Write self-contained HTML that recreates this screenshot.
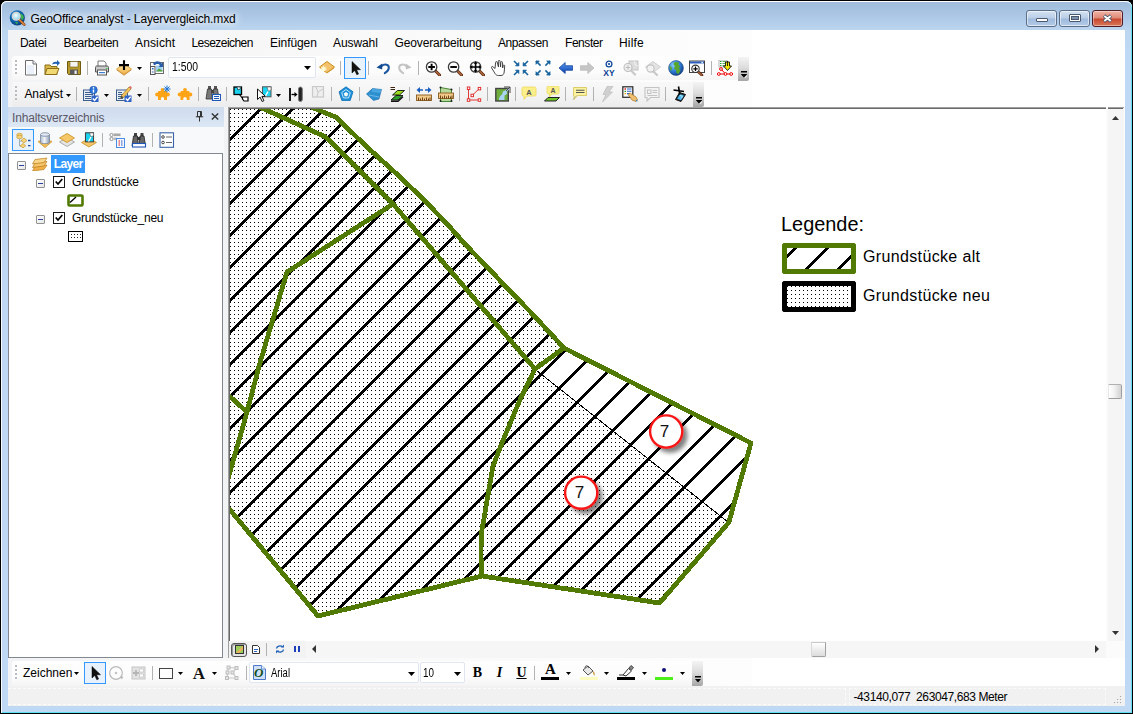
<!DOCTYPE html>
<html lang="de">
<head>
<meta charset="utf-8">
<title>GeoOffice analyst - Layervergleich.mxd</title>
<style>
html,body{margin:0;padding:0;}
body{width:1133px;height:714px;overflow:hidden;background:#000;position:relative;font-family:"Liberation Sans",sans-serif;font-size:12px;color:#000;}
.a{position:absolute;}
.t{position:absolute;white-space:nowrap;line-height:14px;}
#win{left:0;top:0;width:1133px;height:714px;background:#000;}
#frame{left:1px;top:1px;width:1131px;height:712px;border-radius:6px 6px 0 0;background:linear-gradient(#9fbcdc 0px,#a4c0df 6px,#afcae8 18px,#bcd6f0 29px,#bfd9f4 50px,#bfd9f4 100%);box-shadow:inset 0 1px 0 0 #fff,inset 1px 0 0 0 rgba(255,255,255,.85),inset -1px 0 0 0 #5fe0f5,inset 0 -1px 0 0 #5fe0f5;}
#client{left:8px;top:30px;width:1117px;height:676px;background:#fff;}
.sep{position:absolute;width:1px;background:#b2b2b2;}
.grip{position:absolute;width:2px;}
.tb{position:absolute;background:linear-gradient(#fafbfb,#f3f4f4 60%,#ebebeb);}
</style>
</head>
<body>
<div class="a" id="win">
<div class="a" id="frame"></div>
<!--TITLE-->
<svg class="a" style="left:9px;top:9px" width="18" height="18" viewBox="0 0 18 18">
<defs><radialGradient id="gl" cx="40%" cy="35%" r="70%"><stop offset="0" stop-color="#3aa0e0"/><stop offset=".6" stop-color="#0d5fa8"/><stop offset="1" stop-color="#0a3a72"/></radialGradient>
<radialGradient id="ln" cx="45%" cy="40%" r="60%"><stop offset="0" stop-color="#f4fcff"/><stop offset="1" stop-color="#8fd4f4"/></radialGradient></defs>
<circle cx="8.3" cy="8.8" r="7.6" fill="url(#gl)"/>
<path d="M11 4.5l3 1.5l.8 3l-2 2.5l-1-3z M6 13l3 .5l-1 2z" fill="#3cb54a"/>
<path d="M10 10.5L15.3 15.6" stroke="#7a3d12" stroke-width="2.6" stroke-linecap="round"/>
<path d="M10 10.5L15.2 15.5" stroke="#e8853a" stroke-width="1.5" stroke-linecap="round"/>
<circle cx="7.2" cy="7.2" r="3.9" fill="url(#ln)" stroke="#d9d4cf" stroke-width="1.3"/>
</svg>
<div class="t" style="left:30.500px;top:12px;font-size:12px;letter-spacing:-.125px;text-shadow:0 0 6px #fff,0 0 9px #fff,0 0 12px rgba(255,255,255,.8)">GeoOffice analyst - Layervergleich.mxd</div>
<!-- window buttons -->
<div class="a" style="left:1026px;top:10px;width:31px;height:17px;border:1px solid #5b6f88;border-radius:3px;box-sizing:border-box;background:linear-gradient(#d4e2f2 0,#b9cde6 48%,#9fbade 52%,#b4cbe7 100%);box-shadow:inset 0 0 0 1px rgba(255,255,255,.55)"></div>
<div class="a" style="left:1036px;top:18px;width:12px;height:4px;background:#fff;border:1px solid #4a5870;box-sizing:border-box;border-radius:1px"></div>
<div class="a" style="left:1059px;top:10px;width:31px;height:17px;border:1px solid #5b6f88;border-radius:3px;box-sizing:border-box;background:linear-gradient(#d4e2f2 0,#b9cde6 48%,#9fbade 52%,#b4cbe7 100%);box-shadow:inset 0 0 0 1px rgba(255,255,255,.55)"></div>
<div class="a" style="left:1069px;top:14px;width:12px;height:8px;background:#fff;border:1px solid #4a5870;box-sizing:border-box;border-radius:1px"></div>
<div class="a" style="left:1072px;top:17px;width:6px;height:2px;background:#7f93b0;border:1px solid #4a5870;box-sizing:content-box;margin:-1px 0 0 -1px"></div>
<div class="a" style="left:1092px;top:10px;width:31px;height:17px;border:1px solid #4f1c26;border-radius:3px;box-sizing:border-box;background:linear-gradient(#f0b3a4 0,#e08a78 47%,#c8492f 53%,#d9765a 100%);box-shadow:inset 0 0 0 1px rgba(255,255,255,.4)"></div>
<svg class="a" style="left:1102px;top:14px" width="11" height="9" viewBox="0 0 11 9"><path d="M2 1.700L9 7.300M9 1.700L2 7.300" stroke="#3f4c66" stroke-width="3.400"/><path d="M2.300 2L8.700 7M8.700 2L2.300 7" stroke="#fff" stroke-width="2"/></svg>
<div class="a" id="client"></div>
<!--MENUS-->
<div class="a" style="left:8px;top:30px;width:744px;height:77px;background:linear-gradient(90deg,#f2f3f4,#f8f8f9 40%,#fdfdfd)"></div>
<div class="t" style="left:20.0px;top:35.8px;font-size:12px;line-height:14px;letter-spacing:-0.329px;">Datei</div>
<div class="t" style="left:63.5px;top:35.8px;font-size:12px;line-height:14px;letter-spacing:-0.305px;">Bearbeiten</div>
<div class="t" style="left:135.0px;top:35.8px;font-size:12px;line-height:14px;letter-spacing:0.140px;">Ansicht</div>
<div class="t" style="left:191.5px;top:35.8px;font-size:12px;line-height:14px;letter-spacing:-0.549px;">Lesezeichen</div>
<div class="t" style="left:270.0px;top:35.8px;font-size:12px;line-height:14px;letter-spacing:-0.068px;">Einfügen</div>
<div class="t" style="left:333.0px;top:35.8px;font-size:12px;line-height:14px;letter-spacing:-0.093px;">Auswahl</div>
<div class="t" style="left:394.5px;top:35.8px;font-size:12px;line-height:14px;letter-spacing:-0.135px;">Geoverarbeitung</div>
<div class="t" style="left:498.0px;top:35.8px;font-size:12px;line-height:14px;letter-spacing:-0.439px;">Anpassen</div>
<div class="t" style="left:565.0px;top:35.8px;font-size:12px;line-height:14px;letter-spacing:-0.448px;">Fenster</div>
<div class="t" style="left:619.0px;top:35.8px;font-size:12px;line-height:14px;letter-spacing:0.196px;">Hilfe</div>
<!--/MENUS-->
<!--TOOLBARS-->
<div class="a" style="left:12px;top:56px;width:726px;height:24px;border-radius:3px 0 0 3px;background:linear-gradient(#fefefe,#fcfcfc 65%,#f5f5f5)"></div>
<div class="a" style="left:12px;top:82px;width:681px;height:25px;border-radius:3px 0 0 3px;background:linear-gradient(#f8f8f8,#f3f3f3 55%,#ececec)"></div>
<div class="a" style="left:738px;top:57px;width:11px;height:24px;background:linear-gradient(#f4f4f4 0%,#dcdcdc 45%,#a6a6a6 100%);border-radius:0 0 2px 0"></div><svg class="a" style="left:741px;top:71px" width="6" height="7" viewBox="0 0 6 7"><path d="M0 0h6v1.500h-6zM0 3h6l-3 3.500z" fill="#000"/><path d="M1 4.500h5l-2.500 3z" fill="#fff" opacity=".6" transform="translate(.6 .3)"/><path d="M0 3h6l-3 3.500z" fill="#000"/></svg>
<div class="a" style="left:693px;top:82px;width:11px;height:25px;background:linear-gradient(#f4f4f4 0%,#dcdcdc 45%,#a6a6a6 100%);border-radius:0 0 2px 0"></div><svg class="a" style="left:696px;top:97px" width="6" height="7" viewBox="0 0 6 7"><path d="M0 0h6v1.500h-6zM0 3h6l-3 3.500z" fill="#000"/><path d="M1 4.500h5l-2.500 3z" fill="#fff" opacity=".6" transform="translate(.6 .3)"/><path d="M0 3h6l-3 3.500z" fill="#000"/></svg>
<svg class="a" style="left:15px;top:59px" width="3" height="16" viewBox="0 0 3 16"><path d="M0 1h2v2h-2zM0 5h2v2h-2zM0 9h2v2h-2zM0 13h2v2h-2z" fill="#b8bcc2"/></svg>
<svg class="a" style="left:23px;top:60px" width="16" height="16" viewBox="0 0 16 16"><path d="M2.5 .5h7.500l3.500 3.500v11h-11z" fill="#fff" stroke="#6e6e6e"/><path d="M10 .5v3.500h3.500" fill="#e8eef8" stroke="#6e6e6e"/><path d="M4 5h7v9h-7z" fill="#eaf1fb"/></svg>
<svg class="a" style="left:44px;top:60px" width="16" height="16" viewBox="0 0 16 16"><path d="M1 5h5l1 1.500h6v8h-12z" fill="#d9b84a" stroke="#8a6d14"/><path d="M3 8.500h12l-2.500 6h-11.500z" fill="#f1d873" stroke="#8a6d14"/><path d="M8 4.500c1-2.500 3-3 5-2.500v-2l3 3l-3 3v-2c-2-.5-3.500 0-5 .5z" fill="#1d5fb4"/></svg>
<svg class="a" style="left:66px;top:60px" width="16" height="16" viewBox="0 0 16 16"><path d="M1.500 1.500h13v13h-12l-1-1z" fill="#b89a2e" stroke="#6d5a10"/><rect x="4" y="1.500" width="8" height="5.500" fill="#f4f4f4" stroke="#6d5a10" stroke-width=".6"/><rect x="4" y="9.500" width="8" height="5" fill="#5a5a5a"/><rect x="8.500" y="10.500" width="2.200" height="3.500" fill="#eee"/></svg>
<div class="sep" style="left:87px;top:61px;height:14px"></div>
<svg class="a" style="left:94px;top:60px" width="16" height="16" viewBox="0 0 16 16"><path d="M4 1h6l2 2v5h-8z" fill="#fff" stroke="#777"/><path d="M1.500 7.500c0-1 .5-1.500 1.500-1.500h10c1 0 1.500 .5 1.500 1.500v4.500h-13z" fill="#c9c9c9" stroke="#555"/><rect x="3.500" y="10" width="9" height="5" fill="#fff" stroke="#555"/><rect x="5" y="12" width="6" height="1.200" fill="#3d7fd6"/><rect x="12" y="8" width="1.500" height="1" fill="#3c3"/></svg><svg class="a" style="left:116px;top:60px" width="16" height="16" viewBox="0 0 16 16"><defs><linearGradient id="ad" x1="0" y1="0" x2="0" y2="1"><stop offset="0" stop-color="#fdeab8"/><stop offset="1" stop-color="#f0b040"/></linearGradient></defs><path d="M.5 9l7.500-5.500l7.500 5.500l-7.500 5.500z" fill="url(#ad)" stroke="#d79a34" stroke-width=".8"/><path d="M.8 9.900l7.200 5.300l7.200-5.300" fill="none" stroke="#c98a28" stroke-width=".9"/><path d="M8 .3v9.600M3 5.100h10" stroke="#000" stroke-width="2.100"/></svg><svg class="a" style="left:137px;top:67px" width="5" height="3" viewBox="0 0 5 3"><path d="M0 0h5l-2.500 3z" fill="#000"/></svg>
<svg class="a" style="left:149px;top:60px" width="16" height="16" viewBox="0 0 16 16"><rect x="1.500" y="2.500" width="13" height="11" fill="#fff" stroke="#6a6a6a" stroke-width="1"/><rect x="7" y="5.500" width="6.500" height="6" fill="#9fd0f4"/><path d="M7 11.500l3-3l3.500 2v1z" fill="#58a33c"/><rect x="1.500" y="6.500" width="4.500" height="8" fill="#f4f4f4" stroke="#555" stroke-width="1"/><rect x="3" y="8" width="1.500" height="1.500" fill="#2a6fc4"/><path d="M3 12h1.500" stroke="#2a6fc4" stroke-width="1"/><path d="M4 4c1.500-3.500 6.500-3.500 8.500-.5l1.500-1v4.500h-4.500l1.500-1.500c-1.500-2-4-1.800-5 0z" fill="#2a5da8"/></svg>
<div class="a" style="left:168px;top:57px;width:148px;height:21px;box-sizing:border-box;border:1px solid #dfe6f0;border-radius:2px;background:#fff"></div>
<div class="t" style="left:171.5px;top:59.8px;font-size:12px;line-height:14px;transform:scaleX(0.8658);transform-origin:0 0;">1:500</div><svg class="a" style="left:304px;top:66px" width="7" height="4" viewBox="0 0 7 4"><path d="M0 0h7l-3.500 4z" fill="#000"/></svg>
<svg class="a" style="left:319px;top:59px" width="16" height="16" viewBox="0 0 16 16"><path d="M.5 8l7.500-5.500l7.500 5.500l-7.500 5.500z" fill="#f4c26a" stroke="#c98d20"/><path d="M1 9l7 5l7-5" fill="none" stroke="#d69a2e"/><circle cx="4.500" cy="10" r="2.200" fill="#fff8c8"/><path d="M4.500 6.500v7M1 10h7M2 7.500l5 5M7 7.500l-5 5" stroke="#fffbe0" stroke-width=".8"/></svg><div class="sep" style="left:340px;top:61px;height:14px"></div>
<div class="a" style="left:344px;top:57px;width:22px;height:22px;box-sizing:border-box;border:1px solid #3399ff;background:#e8f2fd"></div>
<svg class="a" style="left:348px;top:60px" width="16" height="16" viewBox="0 0 16 16"><path d="M4 1.500v11.500l2.800-2.600l2 4.400l1.800-.8l-2-4.300h3.900z" fill="#111" stroke="#000" stroke-width=".5" stroke-linejoin="round"/></svg><div class="sep" style="left:368px;top:61px;height:14px"></div>
<svg class="a" style="left:375px;top:60px" width="16" height="16" viewBox="0 0 16 16"><path d="M6.500 6.300C9.500 3.300 14.300 4.300 13.800 8.200C13.500 10.500 12 12 9.800 13.200" fill="none" stroke="#1a55a0" stroke-width="2" stroke-linecap="round"/><path d="M1.500 7.600l5.700-4v5.800z" fill="#0f4a92"/></svg><svg class="a" style="left:397px;top:60px" width="16" height="16" viewBox="0 0 16 16"><path d="M9.500 6.300C6.500 3.300 1.700 4.300 2.200 8.200C2.500 10.500 4 12 6.200 13.200" fill="none" stroke="#c4c4c4" stroke-width="2" stroke-linecap="round"/><path d="M14.500 7.600l-5.700-4v5.800z" fill="#c0c0c0"/></svg><div class="sep" style="left:418px;top:61px;height:14px"></div>
<svg class="a" style="left:425px;top:60px" width="16" height="16" viewBox="0 0 16 16"><g transform="translate(.3 .7)"><path d="M9.500 9.500l5 5" stroke="#5b2a12" stroke-width="3" stroke-linecap="round"/><path d="M9.800 9.800l4.500 4.500" stroke="#b9673a" stroke-width="1.400" stroke-linecap="round"/><circle cx="6.300" cy="6.300" r="5.200" fill="#fff" stroke="#3c3c3c" stroke-width="1.300"/><path d="M6.300 3v6.600M3 6.300h6.600" stroke="#000" stroke-width="1.900"/></g></svg>
<svg class="a" style="left:447px;top:60px" width="16" height="16" viewBox="0 0 16 16"><g transform="translate(.3 .7)"><path d="M9.500 9.500l5 5" stroke="#5b2a12" stroke-width="3" stroke-linecap="round"/><path d="M9.800 9.800l4.500 4.500" stroke="#b9673a" stroke-width="1.400" stroke-linecap="round"/><circle cx="6.300" cy="6.300" r="5.200" fill="#fff" stroke="#3c3c3c" stroke-width="1.300"/><path d="M3 6.300h6.600" stroke="#000" stroke-width="1.900"/></g></svg>
<svg class="a" style="left:469px;top:60px" width="16" height="16" viewBox="0 0 16 16"><g transform="translate(.3 .7)"><path d="M9.500 9.500l5 5" stroke="#5b2a12" stroke-width="3" stroke-linecap="round"/><path d="M9.800 9.800l4.500 4.500" stroke="#b9673a" stroke-width="1.400" stroke-linecap="round"/><circle cx="6.300" cy="6.300" r="5.200" fill="#fff" stroke="#3c3c3c" stroke-width="1.300"/><path d="M6.300 1.500v9.600M1.500 6.300h9.600" stroke="#000" stroke-width="1.600"/><path d="M6.300 .6l2 2.400h-4zM6.300 12l2-2.400h-4zM.6 6.300l2.400-2v4zM12 6.300l-2.400-2v4z" fill="#000"/></g></svg>
<svg class="a" style="left:491px;top:60px" width="16" height="16" viewBox="0 0 16 16"><path d="M4 8.500l-2.200-1.800c-.8-.6-1.800 .3-1.200 1.200l3.400 5.600c.8 1.300 1.800 2 3.500 2h2.500c2 0 3-1.500 3.200-3.500l.5-6c.1-1.200-1.400-1.400-1.600-.2l-.4 2.200l-.2-5.500c0-1.200-1.600-1.200-1.700 0l-.2 4.500l-.6-5.800c-.1-1.200-1.700-1.100-1.700 .1l.2 5.700l-1.300-4.800c-.3-1.100-1.800-.7-1.600 .5z" fill="#fff" stroke="#333" stroke-width=".9" stroke-linejoin="round"/></svg>
<svg class="a" style="left:513px;top:60px" width="16" height="16" viewBox="0 0 16 16"><path d="M15 15L10.2 10.2" stroke="#17639f" stroke-width="1.600"/><path d="M13.5 10.2L10.2 10.2L10.2 13.5z" fill="#17639f" stroke="#17639f" stroke-width=".8"/><path d="M1 15L5.8 10.2" stroke="#17639f" stroke-width="1.600"/><path d="M2.5 10.2L5.8 10.2L5.8 13.5z" fill="#17639f" stroke="#17639f" stroke-width=".8"/><path d="M15 1L10.2 5.8" stroke="#17639f" stroke-width="1.600"/><path d="M13.5 5.8L10.2 5.8L10.2 2.5z" fill="#17639f" stroke="#17639f" stroke-width=".8"/><path d="M1 1L5.8 5.8" stroke="#17639f" stroke-width="1.600"/><path d="M2.5 5.8L5.8 5.8L5.8 2.5z" fill="#17639f" stroke="#17639f" stroke-width=".8"/></svg>
<svg class="a" style="left:535px;top:60px" width="16" height="16" viewBox="0 0 16 16"><path d="M10.4 10.4L15 15" stroke="#17639f" stroke-width="1.600"/><path d="M11.7 15L15 15L15 11.7z" fill="#17639f" stroke="#17639f" stroke-width=".8"/><path d="M5.6 10.4L1 15" stroke="#17639f" stroke-width="1.600"/><path d="M4.3 15L1 15L1 11.7z" fill="#17639f" stroke="#17639f" stroke-width=".8"/><path d="M10.4 5.6L15 1" stroke="#17639f" stroke-width="1.600"/><path d="M11.7 1L15 1L15 4.3z" fill="#17639f" stroke="#17639f" stroke-width=".8"/><path d="M5.6 5.6L1 1" stroke="#17639f" stroke-width="1.600"/><path d="M4.3 1L1 1L1 4.3z" fill="#17639f" stroke="#17639f" stroke-width=".8"/></svg>
<svg class="a" style="left:558px;top:60px" width="16" height="16" viewBox="0 0 16 16"><defs><linearGradient id="bk" x1="0" y1="0" x2="0" y2="1"><stop offset="0" stop-color="#5a9cf0"/><stop offset="1" stop-color="#0a3fae"/></linearGradient></defs><path d="M1 8l6.200-5.500v3.200h7.300v4.600h-7.300v3.200z" fill="url(#bk)" stroke="#0b3a9a" stroke-width=".7"/></svg>
<svg class="a" style="left:579px;top:60px" width="16" height="16" viewBox="0 0 16 16"><path d="M15 8l-6.200-5.500v3.200h-7.300v4.600h7.300v3.200z" fill="#c6c6c6" stroke="#b8b8b8" stroke-width=".7"/></svg>
<svg class="a" style="left:601px;top:60px" width="16" height="16" viewBox="0 0 16 16"><circle cx="8" cy="4" r="2.900" fill="#fff" stroke="#114a9a" stroke-width="1.300"/><circle cx="8" cy="4" r="1.100" fill="#114a9a"/><text x="8" y="15.500" font-size="8.500" font-weight="bold" text-anchor="middle" fill="#0a3e94" font-family="'Liberation Sans',sans-serif">XY</text></svg>
<svg class="a" style="left:623px;top:60px" width="16" height="16" viewBox="0 0 16 16"><rect x="6" y="1" width="9" height="9" fill="#ddd" stroke="#c2c2c2"/><path d="M11 1l1.500 4l2.500 1" stroke="#f4f4f4" fill="none"/><path d="M8 10.500l4 4" stroke="#c8c8c8" stroke-width="2.200" stroke-linecap="round"/><circle cx="5" cy="7.500" r="4" fill="#efefef" stroke="#bdbdbd" stroke-width="1.100"/><path d="M5 5.300v4.400M2.800 7.500h4.400" stroke="#bdbdbd" stroke-width="1.100"/></svg>
<svg class="a" style="left:645px;top:60px" width="16" height="16" viewBox="0 0 16 16"><path d="M.5 7l7.500-5.500l7.500 5.500l-7.500 5.500z" fill="#e3e3e3" stroke="#cfcfcf"/><path d="M8 11l4 4" stroke="#c8c8c8" stroke-width="2.200" stroke-linecap="round"/><circle cx="5.500" cy="8.500" r="3.600" fill="#f2f2f2" stroke="#c2c2c2" stroke-width="1.100"/></svg>
<svg class="a" style="left:668px;top:60px" width="16" height="16" viewBox="0 0 16 16"><defs><radialGradient id="gb" cx="35%" cy="30%" r="75%"><stop offset="0" stop-color="#8fd0ff"/><stop offset=".55" stop-color="#2f7fd8"/><stop offset="1" stop-color="#123c86"/></radialGradient></defs><circle cx="8" cy="8" r="7.400" fill="url(#gb)" stroke="#1b3f7a" stroke-width=".6"/><path d="M6 2.500c2-1 4-.5 5 .5l-.5 2l1.500 1l-1 2.500l1.500 2l-2 3.500l-2-1l-.5-3l-2-1.500l1-2.500l-1.500-1.500z" fill="#5aa52c"/><path d="M1.500 6l2 1l.5 2.500l-1.500 1.500z" fill="#5aa52c"/></svg>
<svg class="a" style="left:689px;top:60px" width="16" height="16" viewBox="0 0 16 16"><rect x=".5" y="1" width="15" height="11.500" fill="#fff" stroke="#444"/><rect x="1" y="1.500" width="14" height="2" fill="#2a5fc0"/><rect x="12.500" y="1.800" width="1.400" height="1.400" fill="#fff"/><path d="M9 11.500l4 3.800" stroke="#5b2a12" stroke-width="2.600" stroke-linecap="round"/><path d="M9.300 11.800l3.500 3.300" stroke="#b9673a" stroke-width="1.100" stroke-linecap="round"/><circle cx="6.500" cy="8.800" r="3.700" fill="#fff" stroke="#333" stroke-width="1.100"/><path d="M6.500 6.600v4.400M4.300 8.800h4.400" stroke="#000" stroke-width="1.200"/></svg>
<div class="sep" style="left:711px;top:61px;height:14px"></div>
<svg class="a" style="left:717px;top:60px" width="16" height="16" viewBox="0 0 16 16"><rect x="2" y="0" width="8" height="7" fill="#fff" stroke="#888" stroke-width=".6"/><path d="M3 1.500h1.500M3 3.500h1.500M3 5.500h1.500" stroke="#2a9a2a" stroke-width="1.200"/><path d="M5.500 1.500h3.500M5.500 3.500h3.500M5.500 5.500h3.500" stroke="#2a9a2a" stroke-width=".8"/><path d="M10.500 1v5M8.500 2h4v4h2l-4 4.500l-4-4.500h2z" fill="#f4e800" stroke="#111" stroke-width=".9" stroke-linejoin="round"/><path d="M1.500 14h13M4 9l4.500 5" stroke="#e00" stroke-width="1"/><circle cx="1.800" cy="14" r="1.400" fill="#fff" stroke="#e00"/><circle cx="8.500" cy="14" r="1.400" fill="#fff" stroke="#e00"/><circle cx="14.200" cy="14" r="1.400" fill="#fff" stroke="#e00"/><circle cx="4" cy="9" r="1.400" fill="#fff" stroke="#e00"/></svg><svg class="a" style="left:15px;top:85px" width="3" height="16" viewBox="0 0 3 16"><path d="M0 1h2v2h-2zM0 5h2v2h-2zM0 9h2v2h-2zM0 13h2v2h-2z" fill="#b8bcc2"/></svg>
<div class="t" style="left:24.5px;top:86.8px;font-size:12px;line-height:14px;letter-spacing:-0.143px;">Analyst</div><svg class="a" style="left:66px;top:94px" width="5" height="3" viewBox="0 0 5 3"><path d="M0 0h5l-2.500 3z" fill="#000"/></svg>
<div class="sep" style="left:76px;top:87px;height:14px"></div>
<svg class="a" style="left:83px;top:86px" width="16" height="16" viewBox="0 0 16 16"><rect x=".5" y="4" width="11" height="10.500" fill="#e8eef6" stroke="#3c5f8e"/><path d="M2 6.500h8M2 8.500h8M2 10.500h6M2 12.500h6" stroke="#3c5f8e" stroke-width="1"/><rect x="8.500" y="9.500" width="7" height="6.500" fill="#2f63c6"/><path d="M9.800 12.500l1.800 2l3-3.800" stroke="#fff" stroke-width="1.400" fill="none"/><circle cx="10.500" cy="4" r="3.800" fill="#2d74da" stroke="#1a4fa8" stroke-width=".6"/><path d="M10.500 3.500v3" stroke="#fff" stroke-width="1.400"/><circle cx="10.500" cy="1.900" r=".8" fill="#fff"/></svg><svg class="a" style="left:104px;top:94px" width="5" height="3" viewBox="0 0 5 3"><path d="M0 0h5l-2.500 3z" fill="#000"/></svg>
<svg class="a" style="left:116px;top:86px" width="16" height="16" viewBox="0 0 16 16"><rect x=".5" y="4" width="11" height="10.500" fill="#e8eef6" stroke="#3c5f8e"/><path d="M2 6.500h4M2 8.500h7M2 10.500h5M2 12.500h5" stroke="#3c5f8e" stroke-width="1"/><rect x="8.500" y="9.500" width="7" height="6.500" fill="#2f63c6"/><path d="M9.800 12.500l1.800 2l3-3.800" stroke="#fff" stroke-width="1.400" fill="none"/><path d="M5.500 9.500l7.500-8.500l2 2l-7.500 8.500l-2.800 .8z" fill="#f2c35a" stroke="#8a6418" stroke-width=".6"/><path d="M13 1l2 2l.8-1c.3-.5-1.500-2.300-2-1.800z" fill="#e06a6a"/><path d="M5.500 9.500l-.8 2.800l2.800-.8z" fill="#444"/></svg><svg class="a" style="left:137px;top:94px" width="5" height="3" viewBox="0 0 5 3"><path d="M0 0h5l-2.500 3z" fill="#000"/></svg>
<div class="sep" style="left:148px;top:87px;height:14px"></div>
<svg class="a" style="left:155px;top:85px" width="16" height="16" viewBox="0 0 16 16"><g transform="translate(-.5 1.500)"><g fill="#ffa416"><rect x="3.500" y="4.500" width="9" height="7.500" rx=".8"/><circle cx="2.600" cy="8" r="1.900"/><circle cx="13.400" cy="8" r="1.900"/><circle cx="8" cy="3.400" r="1.900"/><rect x="3.500" y="11" width="3" height="2.500"/><rect x="9.500" y="11" width="3" height="2.500"/></g><circle cx="8" cy="12.300" r="1.700" fill="#fbfbfb"/></g><path d="M12 .5v7M8.500 4h7M9.500 1.500l5 5M14.500 1.500l-5 5" stroke="#1d74d4" stroke-width="1"/></svg><svg class="a" style="left:177px;top:85px" width="16" height="16" viewBox="0 0 16 16"><g transform="translate(0 1.500)"><g fill="#ffa416"><rect x="3.500" y="4.500" width="9" height="7.500" rx=".8"/><circle cx="2.600" cy="8" r="1.900"/><circle cx="13.400" cy="8" r="1.900"/><circle cx="8" cy="3.400" r="1.900"/><rect x="3.500" y="11" width="3" height="2.500"/><rect x="9.500" y="11" width="3" height="2.500"/></g><circle cx="8" cy="12.300" r="1.700" fill="#fbfbfb"/></g></svg><div class="sep" style="left:198px;top:87px;height:14px"></div>
<svg class="a" style="left:205px;top:85px" width="16" height="16" viewBox="0 0 16 16"><path d="M3 1h3v3h-3zM9 1h3v3h-3z" fill="#555"/><path d="M2.500 4h4l1 10h-6.500z" fill="#777" stroke="#333" stroke-width=".8"/><path d="M8.500 4h4l1.500 10h-6.500z" fill="#777" stroke="#333" stroke-width=".8"/><rect x="6" y="5" width="3" height="3" fill="#444"/><rect x="7.500" y="9.500" width="8" height="6" fill="#fff" stroke="#1f57b8" stroke-width="1.100"/><path d="M9 11.500h5M9 13.500h5" stroke="#1f57b8" stroke-width="1"/></svg><div class="sep" style="left:226px;top:87px;height:14px"></div>
<svg class="a" style="left:233px;top:86px" width="16" height="16" viewBox="0 0 16 16"><rect x="1" y="1" width="7.500" height="7.500" fill="#19d3f0" stroke="#000" stroke-width="1.300"/><path d="M4 1l1 3l3.500-2" fill="#fff" stroke="#000" stroke-width=".6"/><path d="M6.500 8.500l3.500 4.500" stroke="#000" stroke-width="1.200"/><path d="M9.500 11h5.500v4h-4l-1.500-2z" fill="#fff" stroke="#000" stroke-width="1.200"/></svg><svg class="a" style="left:256px;top:86px" width="16" height="16" viewBox="0 0 16 16"><rect x="6.500" y=".8" width="8.500" height="10" fill="#19d3f0" stroke="#555" stroke-width="1"/><path d="M11 1l1.500 4.500l2.500-1.500v-3z" fill="#fff" stroke="#555" stroke-width=".6"/><path d="M9 11l3-5.500" stroke="#fff" stroke-width="1.500"/><path d="M1.500 3v10.500l2.600-2.400l2 4.400l1.800-.8l-2-4.300h3.600z" fill="#fff" stroke="#111" stroke-width="1" stroke-linejoin="round"/></svg><svg class="a" style="left:276px;top:94px" width="5" height="3" viewBox="0 0 5 3"><path d="M0 0h5l-2.500 3z" fill="#000"/></svg>
<svg class="a" style="left:288px;top:86px" width="16" height="16" viewBox="0 0 16 16"><path d="M2 2v13" stroke="#000" stroke-width="1.800"/><path d="M3.500 8.500h4" stroke="#000" stroke-width="1.300"/><path d="M6.500 6l3 2.500l-3 2.500z" fill="#000"/><rect x="10.500" y="1" width="3.800" height="14.500" rx="1.900" fill="#222" stroke="#777" stroke-width="1"/></svg><svg class="a" style="left:311px;top:86px" width="16" height="16" viewBox="0 0 16 16"><rect x="1.500" y=".5" width="11" height="10.500" fill="#eee" stroke="#c9c9c9" stroke-width="1.200"/><path d="M5 1l2 5l-1 5M7 6l5-3" stroke="#c9c9c9" fill="none" stroke-width="1"/></svg><div class="sep" style="left:331px;top:87px;height:14px"></div>
<svg class="a" style="left:338px;top:86px" width="16" height="16" viewBox="0 0 16 16"><path d="M8 .8l7 5l-2.800 8.700h-8.400l-2.800-8.700z" fill="#1c8fd8" stroke="#1272b8" stroke-width=".8"/><path d="M8 3.500l4.300 3.100l-1.700 5.300h-5.200l-1.700-5.300z" fill="none" stroke="#bfe4fb" stroke-width="1"/><path d="M8 6l2.200 1.600l-.9 2.700h-2.600l-.9-2.700z" fill="#fff"/></svg><div class="sep" style="left:359px;top:87px;height:14px"></div>
<svg class="a" style="left:366px;top:86px" width="16" height="16" viewBox="0 0 16 16"><path d="M.5 8l6-5.500l9 1l-2.500 9.500l-5.500 1.500z" fill="#2c8fd0" stroke="#1a6aa8" stroke-width=".6"/><path d="M3 9l10 2" stroke="#7cc4ee" stroke-width=".8"/><path d="M6.500 2.500l9 1l-1 3.500l-9-1z" fill="#56aee6" opacity=".7"/></svg><svg class="a" style="left:389px;top:86px" width="16" height="16" viewBox="0 0 16 16"><path d="M1.500 1.500h4.500M1.500 3.500h4.500" stroke="#3a2410" stroke-width="1"/><path d="M3.500 9l5-4.500h7l-5 4.500z" fill="#9bd91f" stroke="#111" stroke-width=".9"/><path d="M2 14l5-4.500h7l-5 4.500z" fill="#2f9e2f" stroke="#111" stroke-width=".9"/><path d="M2 15.300l7 0l5-4.500" fill="none" stroke="#111" stroke-width="1.400"/></svg><div class="sep" style="left:409px;top:87px;height:14px"></div>
<svg class="a" style="left:416px;top:86px" width="16" height="16" viewBox="0 0 16 16"><rect x=".5" y="9" width="15" height="5.500" fill="#f0c98a" stroke="#8a5a1c" stroke-width=".9"/><path d="M2.500 14.500v-3M4.500 14.500v-2M6.500 14.500v-3M8.500 14.500v-2M10.500 14.500v-3M12.500 14.500v-2M14 14.500v-3" stroke="#5a3208" stroke-width=".9"/><path d="M2 4h5M9 4h5" stroke="#1a5fc0" stroke-width="1.600"/><path d="M.5 4l3.500-3v6zM15.500 4l-3.500-3v6z" fill="#1a5fc0"/></svg><svg class="a" style="left:438px;top:86px" width="16" height="16" viewBox="0 0 16 16"><path d="M2.500 1.500l11 2v12h-11z" fill="#b7d99a" stroke="#3a7a2a" stroke-width=".9"/><g transform="translate(0 -2)"><rect x=".5" y="9" width="15" height="5.500" fill="#f0c98a" stroke="#8a5a1c" stroke-width=".9"/><path d="M2.500 14.500v-3M4.500 14.500v-2M6.500 14.500v-3M8.500 14.500v-2M10.500 14.500v-3M12.500 14.500v-2M14 14.500v-3" stroke="#5a3208" stroke-width=".9"/></g><circle cx="2.500" cy="1.500" r="1" fill="#222"/><circle cx="13.500" cy="3.500" r="1" fill="#222"/><circle cx="2.500" cy="15" r="1" fill="#222"/><circle cx="13.500" cy="15" r="1" fill="#222"/></svg><div class="sep" style="left:459px;top:87px;height:14px"></div>
<svg class="a" style="left:466px;top:86px" width="16" height="16" viewBox="0 0 16 16"><path d="M2.500 2v12h11M6 9.500l7.500-7" stroke="#d22" stroke-width=".9" fill="none"/><rect x="1.300" y="1" width="2.500" height="2.500" fill="#fff" stroke="#d22" stroke-width=".9"/><rect x="1.300" y="12.800" width="2.500" height="2.500" fill="#fff" stroke="#d22" stroke-width=".9"/><rect x="12.200" y="12.800" width="2.500" height="2.500" fill="#fff" stroke="#d22" stroke-width=".9"/><rect x="12.200" y="1.400" width="2.500" height="2.500" fill="#fff" stroke="#d22" stroke-width=".9"/><rect x="5" y="8.200" width="2.500" height="2.500" fill="#fff" stroke="#d22" stroke-width=".9"/></svg><div class="sep" style="left:487px;top:87px;height:14px"></div>
<svg class="a" style="left:495px;top:86px" width="16" height="16" viewBox="0 0 16 16"><rect x=".8" y="2.500" width="12.500" height="12.500" fill="#6fae3c" stroke="#444" stroke-width="1.400"/><path d="M4 14c0-3 1-4 3-5.500l1-3l2-1l3.500-2.500l1 1l-3 3l1 1.500l-3 2l0 4.500z" fill="#a9d4f4"/><path d="M9 1h6v6M15 1l-4 4" stroke="#444" stroke-width="1" fill="none"/></svg><div class="sep" style="left:515px;top:87px;height:14px"></div>
<svg class="a" style="left:521px;top:86px" width="16" height="16" viewBox="0 0 16 16"><path d="M1 2.500c0-1 .5-1.500 1.500-1.500h11c1 0 1.500 .5 1.500 1.500v6c0 1-.5 1.500-1.500 1.500h-7.500l-3 3.500v-3.500h-.5c-1 0-1.500-.5-1.500-1.500z" fill="#fcef8c" stroke="#ecd95a" stroke-width=".8"/><text x="8" y="8.500" font-size="7.500" font-weight="bold" text-anchor="middle" fill="#555" font-family="'Liberation Sans',sans-serif">A</text></svg><svg class="a" style="left:544px;top:86px" width="16" height="16" viewBox="0 0 16 16"><path d="M3 1.500c0-1 .5-1.500 1.500-1.500h9c1 0 1.500 .5 1.500 1.500v5c0 1-.5 1.500-1.500 1.500h-5.500l-2.500 3v-3h-1c-1 0-1.500-.5-1.500-1.500z" fill="#fcef8c" stroke="#ecd95a" stroke-width=".8"/><text x="9" y="6.800" font-size="7" font-weight="bold" text-anchor="middle" fill="#555" font-family="'Liberation Sans',sans-serif">A</text><path d="M4 11.500h11.500l-3.500 3.500h-11.500z" fill="#6fc22a" stroke="#222" stroke-width="1"/></svg><div class="sep" style="left:565px;top:87px;height:14px"></div>
<svg class="a" style="left:572px;top:86px" width="16" height="16" viewBox="0 0 16 16"><path d="M1.500 1.500h13v8h-9l-3.500 4v-4h-.5z" fill="#fbf3a0" stroke="#d8c860" stroke-width=".9"/><path d="M4 4.200h8.500M4 6.500h8.500" stroke="#555" stroke-width="1.100"/><path d="M1 13.500l3.500-4" stroke="#aaa" stroke-width=".8"/></svg><div class="sep" style="left:593px;top:87px;height:14px"></div>
<svg class="a" style="left:600px;top:86px" width="16" height="16" viewBox="0 0 16 16"><path d="M7 .5h6l-4 5.500h3.500l-10 10l3.500-7.500h-3z" fill="#d0d0d0" stroke="#bdbdbd" stroke-width=".7"/></svg><svg class="a" style="left:622px;top:86px" width="16" height="16" viewBox="0 0 16 16"><rect x=".8" y=".8" width="10" height="10.500" fill="#fff" stroke="#333" stroke-width="1.300"/><path d="M2.500 3h1.500" stroke="#d22" stroke-width="1.300"/><path d="M2.500 5.300h1.500" stroke="#2a9a2a" stroke-width="1.300"/><path d="M2.500 7.600h1.500" stroke="#e8a000" stroke-width="1.300"/><path d="M5 3h4.500M5 5.300h4.500M5 7.600h3" stroke="#2a62c8" stroke-width="1.100"/><path d="M6 8.500l2-1.500l6 4l1.500 3l-1.500 1.500l-4-1.500z" fill="#f0c070" stroke="#a87420" stroke-width=".7"/><path d="M13.500 15l1.500-1.500l.5 2z" fill="#2a8ad8"/></svg><svg class="a" style="left:644px;top:86px" width="16" height="16" viewBox="0 0 16 16"><path d="M1 1.500h14v10h-8.500l-3.500 3.500v-3.500h-2z" fill="#f2f2f2" stroke="#c4c4c4" stroke-width="1.100"/><rect x="3.500" y="4" width="3.500" height="3.500" fill="none" stroke="#c4c4c4"/><path d="M8.500 4.500h4.500M8.500 6.500h4.500M3.500 9.500h9.500" stroke="#c4c4c4" stroke-width="1"/></svg><div class="sep" style="left:665px;top:87px;height:14px"></div>
<svg class="a" style="left:671px;top:86px" width="16" height="16" viewBox="0 0 16 16"><path d="M8.500 6.500l6 2l-4.500 7l-5.500-2z" fill="#222" stroke="#111" stroke-width="1" stroke-linejoin="round"/><path d="M9 8l4 1.400l-3 4.800l-3.800-1.400z" fill="#4ab6f2"/><path d="M9 9.500l2.500 .9l-1.200 1.900" fill="none" stroke="#c8ecff" stroke-width=".8"/><path d="M7.500 .5l1.300 8M2.500 4l10.500 1.500" stroke="#000" stroke-width="1.600"/></svg>
<!--/TOOLBARS-->
<!--TOC-->
<div class="a" style="left:8px;top:107px;width:220px;height:551px;background:#f2f3f4"></div>
<div class="a" style="left:8px;top:107px;width:216px;height:20px;background:linear-gradient(#cfdcee,#d5e1f1 50%,#dde8f6)"></div>
<div class="t" style="left:12px;top:110.5px;font-size:12px;line-height:14px;letter-spacing:-0.164px;color:#5a5666;">Inhaltsverzeichnis</div><svg class="a" style="left:195px;top:111px" width="9" height="11" viewBox="0 0 9 11"><path d="M2.500 .5h4v5h-4zM5.500 .5v5M.8 5.800h7.400M4.500 6v4.500" stroke="#333" stroke-width="1" fill="none"/></svg>
<svg class="a" style="left:211px;top:113px" width="8" height="7" viewBox="0 0 8 7"><path d="M.8 .5l6.400 6M7.200 .5l-6.400 6" stroke="#333" stroke-width="1.400"/></svg>
<div class="a" style="left:8px;top:127px;width:216px;height:26px;background:#f8f9fa"></div>
<div class="a" style="left:12px;top:129px;width:22px;height:22px;box-sizing:border-box;border:1px solid #3399ff;background:#e8f2fd"></div>
<svg class="a" style="left:15px;top:132px" width="16" height="16" viewBox="0 0 16 16"><ellipse cx="4.500" cy="3" rx="2.800" ry="1.800" fill="#f6d27a" stroke="#c99a2e" stroke-width=".7"/><ellipse cx="4.500" cy="5" rx="2.800" ry="1.800" fill="#f6d27a" stroke="#c99a2e" stroke-width=".7"/><path d="M4.500 7v7h3M4.500 9h3" stroke="#9ab" stroke-width="1" fill="none"/><path d="M9 6l3 2.500l-3 2.500l-3-2.500zM8 11.500l2.800 2.200l-2.800 2.200l-2.800-2.200z" fill="#f6d27a" stroke="#c99a2e" stroke-width=".7"/><path d="M13 8.500h2.500M13 13.700h2.500" stroke="#1f4fa8" stroke-width="1.300"/></svg>
<svg class="a" style="left:37px;top:132px" width="16" height="16" viewBox="0 0 16 16"><defs><linearGradient id="cy" x1="0" y1="0" x2="1" y2="0"><stop offset="0" stop-color="#aebccf"/><stop offset=".45" stop-color="#f2f5fa"/><stop offset="1" stop-color="#8d9db4"/></linearGradient></defs><path d="M1 9.500l7-2l7 2l-7 6z" fill="#f4bf5a" stroke="#d0962a" stroke-width=".8"/><path d="M3.500 2.500v8c0 1.500 9 1.500 9 0v-8" fill="url(#cy)" stroke="#74849c" stroke-width=".8"/><ellipse cx="8" cy="2.500" rx="4.500" ry="1.800" fill="#e4eaf3" stroke="#74849c" stroke-width=".8"/></svg>
<svg class="a" style="left:59px;top:132px" width="16" height="16" viewBox="0 0 16 16"><path d="M.5 10l7.500-4.500l7.500 4.500l-7.500 4.500z" fill="#e4e4e4" stroke="#9a9a9a" stroke-width=".8"/><path d="M.5 6l7.500-4.500l7.500 4.500l-7.500 4.500z" fill="#f6c768" stroke="#c98d20" stroke-width=".8"/></svg>
<svg class="a" style="left:81px;top:132px" width="16" height="16" viewBox="0 0 16 16"><path d="M.5 10.500l7.500-4l7.500 4l-7.500 4.500z" fill="#f6c768" stroke="#c98d20" stroke-width=".8"/><rect x="4.500" y=".8" width="8" height="9" fill="#19d3f0" stroke="#444" stroke-width="1.100"/><path d="M8.500 1l1.500 4l2.500-1.500v-2.500z" fill="#fff" stroke="#444" stroke-width=".5"/><path d="M7.500 9.500l2.500-4.500" stroke="#fff" stroke-width="1.300"/></svg>
<div class="sep" style="left:102px;top:133px;height:14px"></div>
<svg class="a" style="left:109px;top:132px" width="16" height="16" viewBox="0 0 16 16"><circle cx="2.500" cy="3" r="1.600" fill="#fff" stroke="#8a8a8a" stroke-width=".9"/><circle cx="2.500" cy="7" r="1.600" fill="#fff" stroke="#8a8a8a" stroke-width=".9"/><rect x="4.500" y="1.500" width="7" height="2.600" fill="#a8a8a8"/><rect x="4.500" y="5.500" width="3" height="2.600" fill="#b8b8b8"/><rect x="7.500" y="6.500" width="8" height="9" fill="#f4f9ff" stroke="#4a8ae8" stroke-width="1"/><path d="M9.500 9h1.500M9.500 11h1.500M9.500 13h1.500" stroke="#d22" stroke-width="1.200"/><path d="M12 9h1.500M12 11h1.500M12 13h1.500" stroke="#2a52b8" stroke-width="1.200"/></svg><svg class="a" style="left:131px;top:132px" width="16" height="16" viewBox="0 0 16 16"><path d="M3 1h3v3h-3zM9.500 1h3v3h-3z" fill="#444"/><path d="M2.500 4h4l1 10h-6.500z" fill="#666" stroke="#222" stroke-width=".8"/><path d="M9 4h4l1.500 10h-6.500z" fill="#666" stroke="#222" stroke-width=".8"/><rect x="6" y="5" width="3.500" height="3" fill="#333"/><rect x="1.500" y="11.500" width="13" height="3.500" fill="#fff" stroke="#1f57b8" stroke-width="1.100"/></svg><div class="sep" style="left:152px;top:133px;height:14px"></div>
<svg class="a" style="left:159px;top:132px" width="16" height="16" viewBox="0 0 16 16"><rect x="1" y=".8" width="13.500" height="14.500" fill="#fff" stroke="#3a64a8" stroke-width="1.100"/><circle cx="4" cy="5" r="1.300" fill="#fff" stroke="#333" stroke-width=".9"/><circle cx="4" cy="10.500" r="1.300" fill="#fff" stroke="#333" stroke-width=".9"/><path d="M7 5h6M7 10.500h6" stroke="#666" stroke-width="1.100"/></svg>
<div class="a" style="left:8px;top:153px;width:215px;height:505px;box-sizing:border-box;border:1px solid #828790;background:#fff"></div>
<div class="a" style="left:17px;top:161px;width:9px;height:9px;box-sizing:border-box;border:1px solid #919191;border-radius:1px;background:linear-gradient(135deg,#fff,#e6e6e6)"></div><div class="a" style="left:19px;top:165px;width:5px;height:1px;background:#2a3f9e"></div>
<svg class="a" style="left:32px;top:155px" width="16" height="16" viewBox="0 0 16 16"><path d="M3 11.500l12-1.500l-3 4.500l-11.500 1.500z" fill="#f1b04a" stroke="#b97c18" stroke-width=".7"/><path d="M3 8l12-1.500l-3 4.500l-11.500 1.500z" fill="#f6c46a" stroke="#b97c18" stroke-width=".7"/><path d="M3 4.500l12-1.500l-3 4.500l-11.500 1.500z" fill="#fad58a" stroke="#b97c18" stroke-width=".7"/></svg><div class="a" style="left:51px;top:155px;width:34px;height:18px;background:#3399ff"></div>
<div class="t" style="left:53.8px;top:156.8px;font-size:12px;line-height:14px;letter-spacing:-0.633px;color:#fff;font-weight:bold;">Layer</div><div class="a" style="left:36px;top:179px;width:9px;height:9px;box-sizing:border-box;border:1px solid #919191;border-radius:1px;background:linear-gradient(135deg,#fff,#e6e6e6)"></div><div class="a" style="left:38px;top:183px;width:5px;height:1px;background:#2a3f9e"></div>
<div class="a" style="left:53px;top:176px;width:12px;height:12px;box-sizing:border-box;border:1px solid #1c1c1c;background:#fff"></div><svg class="a" style="left:55px;top:178px" width="8" height="8" viewBox="0 0 8 8"><path d="M.7 3.500l2.300 2.500l4.300-5" stroke="#000" stroke-width="1.700" fill="none"/></svg>
<div class="t" style="left:72px;top:175.3px;font-size:12px;line-height:14px;letter-spacing:-0.105px;">Grundstücke</div><svg class="a" style="left:67px;top:194px" width="17" height="13" viewBox="0 0 17 13"><rect x="1.500" y="1.500" width="14" height="10" rx="1" fill="#fff" stroke="#507a02" stroke-width="2.600"/><path d="M3 8.500l6-5.500" stroke="#000" stroke-width="1.300"/></svg>
<div class="a" style="left:36px;top:215px;width:9px;height:9px;box-sizing:border-box;border:1px solid #919191;border-radius:1px;background:linear-gradient(135deg,#fff,#e6e6e6)"></div><div class="a" style="left:38px;top:219px;width:5px;height:1px;background:#2a3f9e"></div>
<div class="a" style="left:53px;top:212px;width:12px;height:12px;box-sizing:border-box;border:1px solid #1c1c1c;background:#fff"></div><svg class="a" style="left:55px;top:214px" width="8" height="8" viewBox="0 0 8 8"><path d="M.7 3.500l2.300 2.500l4.300-5" stroke="#000" stroke-width="1.700" fill="none"/></svg>
<div class="t" style="left:72px;top:211.3px;font-size:12px;line-height:14px;letter-spacing:-0.231px;">Grundstücke_neu</div><svg class="a" style="left:68px;top:231px" width="15" height="11" viewBox="0 0 15 11"><rect x=".5" y=".5" width="14" height="10" fill="#fff" stroke="#000"/><path d="M3 3h1v1h-1zM6 3h1v1h-1zM9 3h1v1h-1zM12 3h1v1h-1zM3 6h1v1h-1zM6 6h1v1h-1zM9 6h1v1h-1zM12 6h1v1h-1z" fill="#222" shape-rendering="crispEdges"/></svg>
<!--/TOC-->
<!--MAP-->
<div class="a" style="left:228px;top:107px;width:897px;height:551px;background:#f0f0f0"></div>
<div class="a" style="left:228px;top:107px;width:878px;height:1px;background:#a0a0a0"></div>
<div class="a" style="left:228px;top:107px;width:1px;height:551px;background:#a0a0a0"></div>
<div class="a" style="left:229px;top:108px;width:877px;height:1px;background:#696969"></div>
<div class="a" style="left:229px;top:108px;width:1px;height:533px;background:#696969"></div>
<svg class="a" style="left:230px;top:109px;background:#fff" width="876" height="532" viewBox="230 109 876 532" font-family="'Liberation Sans',sans-serif">
<defs>
<pattern id="dA" patternUnits="userSpaceOnUse" x="0" y="0" width="4" height="4"><rect x="2" y="1" width="1" height="1" fill="#050505"/></pattern><pattern id="dB" patternUnits="userSpaceOnUse" x="0" y="0" width="4" height="4"><rect x="3" y="1" width="1" height="1" fill="#050505"/></pattern><pattern id="dC" patternUnits="userSpaceOnUse" x="0" y="0" width="4" height="4"><rect x="2" y="2" width="1" height="1" fill="#050505"/></pattern><pattern id="dD" patternUnits="userSpaceOnUse" x="0" y="0" width="4" height="4"><rect x="3" y="2" width="1" height="1" fill="#050505"/></pattern><clipPath id="qA"><rect x="230" y="109" width="120" height="15"/></clipPath><clipPath id="qB"><rect x="350" y="109" width="760" height="15"/></clipPath><clipPath id="qC"><rect x="230" y="124" width="120" height="520"/></clipPath><clipPath id="qD"><rect x="350" y="124" width="760" height="520"/></clipPath>
<clipPath id="cu"><polygon points="230,109 316,109 336,117.3 367,147 400,177 421.5,197.5 445,221.7 466.3,245.5 487.6,267.5 508.9,290 529,310.5 564,348 751,443 728.8,522.5 659.5,603 482,576 318,616 230,508.5"/></clipPath>
<filter id="sh" x="-30%" y="-30%" width="180%" height="180%"><feGaussianBlur in="SourceAlpha" stdDeviation="2.3"/><feOffset dx="3.500" dy="3.500"/><feComponentTransfer><feFuncA type="linear" slope=".5"/></feComponentTransfer><feMerge><feMergeNode/><feMergeNode in="SourceGraphic"/></feMerge></filter>
</defs>
<g clip-path="url(#qA)"><polygon points="230,109 316,109 336,117.3 367,147 400,177 421.5,197.5 445,221.7 466.3,245.5 487.6,267.5 508.9,290 529,310.5 564,348 535,369 728,522 728.8,522.5 659.5,603 482,576 318,616 230,508.5" fill="url(#dA)" shape-rendering="crispEdges"/></g><g clip-path="url(#qB)"><polygon points="230,109 316,109 336,117.3 367,147 400,177 421.5,197.5 445,221.7 466.3,245.5 487.6,267.5 508.9,290 529,310.5 564,348 535,369 728,522 728.8,522.5 659.5,603 482,576 318,616 230,508.5" fill="url(#dB)" shape-rendering="crispEdges"/></g><g clip-path="url(#qC)"><polygon points="230,109 316,109 336,117.3 367,147 400,177 421.5,197.5 445,221.7 466.3,245.5 487.6,267.5 508.9,290 529,310.5 564,348 535,369 728,522 728.8,522.5 659.5,603 482,576 318,616 230,508.5" fill="url(#dC)" shape-rendering="crispEdges"/></g><g clip-path="url(#qD)"><polygon points="230,109 316,109 336,117.3 367,147 400,177 421.5,197.5 445,221.7 466.3,245.5 487.6,267.5 508.9,290 529,310.5 564,348 535,369 728,522 728.8,522.5 659.5,603 482,576 318,616 230,508.5" fill="url(#dD)" shape-rendering="crispEdges"/></g>
<path d="M535 369.300L728 522" stroke="#000" stroke-width="1" fill="none" shape-rendering="crispEdges"/>
<g clip-path="url(#cu)"><path d="M220 117.5L780 -442.5M220 149.5L780 -410.5M220 181.5L780 -378.5M220 213.5L780 -346.5M220 245.5L780 -314.5M220 277.5L780 -282.5M220 310.5L780 -249.5M220 342.5L780 -217.5M220 374.5L780 -185.5M220 406.5L780 -153.5M220 438.5L780 -121.5M220 470.5L780 -89.5M220 502.5L780 -57.5M220 534.5L780 -25.5M220 566.5L780 6.5M220 598.5L780 38.5M220 630.5L780 70.5M220 663.5L780 103.5M220 695.5L780 135.5M220 727.5L780 167.5M220 759.5L780 199.5M220 791.5L780 231.5M220 823.5L780 263.5M220 855.5L780 295.5M220 887.5L780 327.5M220 919.5L780 359.5M220 951.5L780 391.5M220 983.5L780 423.5M220 1016.5L780 456.5M220 1048.5L780 488.5" stroke="#000" stroke-width="2.9" fill="none" shape-rendering="crispEdges"/></g>
<g fill="none" stroke="#507a02" stroke-width="4.8" stroke-linejoin="round" stroke-linecap="butt" shape-rendering="crispEdges">
<path d="M311 107L316 109L336 117.3 L367 147 L400 177 L421.5 197.5 L445 221.7 L466.3 245.5 L487.6 267.5 L508.9 290 L529 310.5 L564 348L751 443L728.800 522.500L659.500 603L482 576L318 616L226 505"/>
<path d="M259.500 107L264 109L325.400 136.800L393 204L535 369L564 348"/>
<path d="M393 204L287 272L259.6 364L247 412L228 479"/>
<path d="M226 393L247 412"/>
<path d="M535 369L519 402L503 440.500L493 466L488 495L481.300 534L481 553L481.500 576"/>
</g>
<g filter="url(#sh)"><circle cx="666.200" cy="431.500" r="16.100" fill="#fff" stroke="#f81616" stroke-width="2.400"/></g>
<g filter="url(#sh)"><circle cx="581.200" cy="492.700" r="16.100" fill="#fff" stroke="#f81616" stroke-width="2.400"/></g>
<text x="664.600" y="437" font-size="17" text-anchor="middle" fill="#111">7</text>
<text x="579.600" y="498.100" font-size="17" text-anchor="middle" fill="#111">7</text>
<!-- legend -->
<text x="781" y="231" font-size="20" fill="#000" textLength="83" lengthAdjust="spacingAndGlyphs">Legende:</text>
<clipPath id="lg1"><rect x="786" y="247" width="66" height="23"/></clipPath>
<g clip-path="url(#lg1)"><path d="M781 262.500L801 242.500M795 280.500L835 240.500M826 281.500L866 241.500" stroke="#000" stroke-width="2.900" shape-rendering="crispEdges"/></g>
<path d="M783.500 243h71l1.500 1.500v28l-1.500 1.500h-71l-1.500-1.500v-28zM787 248v21h64v-21z" fill="#507a02" fill-rule="evenodd"/>
<rect x="787" y="286" width="64" height="21" fill="url(#dD)" shape-rendering="crispEdges"/>
<path d="M783.500 281h71l1.500 1.500v28l-1.500 1.500h-71l-1.500-1.500v-28zM787 286v21h64v-21z" fill="#000" fill-rule="evenodd"/>
<text x="863" y="262" font-size="16" fill="#000" textLength="117" lengthAdjust="spacing">Grundstücke alt</text>
<text x="863" y="300.500" font-size="16" fill="#000" textLength="127" lengthAdjust="spacing">Grundstücke neu</text>
</svg>
<!--BOTTOM-->
<div class="a" style="left:230px;top:641px;width:878px;height:17px;background:#f3f3f3"></div>
<div class="a" style="left:306px;top:641px;width:802px;height:17px;background:#f6f6f6"></div>
<div class="a" style="left:231px;top:643px;width:16px;height:14px;box-sizing:border-box;border:1px solid #555;border-radius:3px;background:#e4e4e4;box-shadow:inset 1px 1px 0 #9a9a9a"></div>
<svg class="a" style="left:235px;top:645px" width="9" height="9" viewBox="0 0 9 9"><rect x=".5" y=".5" width="8" height="8" fill="#9ccc5a" stroke="#333"/><path d="M1 8l7-7v3l-4 4z" fill="#f0b060"/></svg>
<svg class="a" style="left:252px;top:645px" width="8" height="9" viewBox="0 0 8 9"><path d="M.5 .5h5l2 2v6h-7z" fill="#fff" stroke="#333"/><path d="M2 4.500h4M2 6.500h3" stroke="#2a62c8" stroke-width="1"/></svg>
<div class="sep" style="left:266px;top:643px;height:13px"></div>
<svg class="a" style="left:275px;top:644px" width="10" height="10" viewBox="0 0 10 10"><path d="M1.500 4.500c.3-2.500 4-3.500 6-1.500M8.500 5.500c-.3 2.500-4 3.500-6 1.500" stroke="#1f5fb8" stroke-width="1.400" fill="none"/><path d="M6 3.500h3v-3zM4 6.500h-3v3z" fill="#1f5fb8"/></svg>
<div class="a" style="left:294px;top:646px;width:2px;height:6px;background:#1f3fb8"></div><div class="a" style="left:298px;top:646px;width:2px;height:6px;background:#1f3fb8"></div>
<svg class="a" style="left:312px;top:645px" width="4" height="8" viewBox="0 0 4 8"><path d="M4 0v8l-4-4z" fill="#333"/></svg>
<svg class="a" style="left:1095px;top:645px" width="4" height="8" viewBox="0 0 4 8"><path d="M0 0v8l4-4z" fill="#333"/></svg>
<div class="a" style="left:811px;top:642px;width:15px;height:15px;box-sizing:border-box;border:1px solid #a0a0a0;border-top-color:#c8c8c8;border-left-color:#d8d8d8;border-radius:0 0 2px 2px;background:linear-gradient(#fff,#dcdcdc)"></div>
<div class="a" style="left:1106px;top:107px;width:19px;height:551px;background:#fbfbfb"></div><div class="a" style="left:1108px;top:107px;width:16px;height:534px;background:#f5f5f5"></div><div class="a" style="left:1108px;top:107px;width:16px;height:1px;background:#a0a0a0"></div><div class="a" style="left:1108px;top:108px;width:15px;height:1px;background:#696969"></div>
<svg class="a" style="left:1112px;top:116px" width="7" height="4" viewBox="0 0 7 4"><path d="M0 4h7l-3.500-4z" fill="#333"/></svg>
<svg class="a" style="left:1112px;top:631px" width="7" height="4" viewBox="0 0 7 4"><path d="M0 0h7l-3.500 4z" fill="#333"/></svg>
<div class="a" style="left:1108px;top:384px;width:14px;height:15px;box-sizing:border-box;border:1px solid #9e9e9e;border-left-color:#e8e8e8;border-top-color:#b0b0b0;border-radius:0 2px 2px 0;background:linear-gradient(90deg,#fff,#f4f4f4 40%,#d2d2d2)"></div>
<div class="a" style="left:8px;top:658px;width:744px;height:28px;background:linear-gradient(90deg,#f2f3f4,#f8f8f9 40%,#fdfdfd)"></div>
<div class="a" style="left:12px;top:661px;width:680px;height:25px;border-radius:3px 0 0 3px;background:linear-gradient(#fefefe,#fcfcfc 65%,#f4f4f4)"></div>
<div class="a" style="left:692px;top:661px;width:11px;height:25px;background:linear-gradient(#f4f4f4 0%,#dcdcdc 45%,#a6a6a6 100%);border-radius:0 0 2px 0"></div><svg class="a" style="left:695px;top:676px" width="6" height="7" viewBox="0 0 6 7"><path d="M0 0h6v1.500h-6zM0 3h6l-3 3.500z" fill="#000"/></svg>
<svg class="a" style="left:15px;top:664px" width="3" height="16" viewBox="0 0 3 16"><path d="M0 1h2v2h-2zM0 5h2v2h-2zM0 9h2v2h-2zM0 13h2v2h-2z" fill="#b8bcc2"/></svg>
<div class="t" style="left:23px;top:665.8px;font-size:12px;line-height:14px;letter-spacing:0.004px;">Zeichnen</div><svg class="a" style="left:74px;top:672px" width="5" height="3" viewBox="0 0 5 3"><path d="M0 0h5l-2.500 3z" fill="#000"/></svg>
<div class="a" style="left:84px;top:662px;width:22px;height:22px;box-sizing:border-box;border:1px solid #3399ff;background:#e8f2fd"></div>
<svg class="a" style="left:88px;top:665px" width="16" height="16" viewBox="0 0 16 16"><path d="M4 1.500v11.500l2.800-2.600l2 4.400l1.800-.8l-2-4.300h3.900z" fill="#111" stroke="#000" stroke-width=".5" stroke-linejoin="round"/></svg><svg class="a" style="left:108px;top:665px" width="16" height="16" viewBox="0 0 16 16"><circle cx="8" cy="8" r="6.300" fill="none" stroke="#b9b9b9" stroke-width="1.200"/><circle cx="8" cy="8" r="1.300" fill="#c4c4c4"/><path d="M12.500 11l3 1l-2 2.500z" fill="#b9b9b9"/></svg><svg class="a" style="left:131px;top:665px" width="16" height="16" viewBox="0 0 16 16"><rect x="1" y="2" width="13" height="12" fill="#e3e3e3" stroke="#c6c6c6"/><rect x="8.500" y="4" width="4" height="3" fill="#fff" stroke="#bbb" stroke-width=".6"/><rect x="8.500" y="9" width="4" height="3" fill="#fff" stroke="#bbb" stroke-width=".6"/><path d="M5 5v6M2 8h6" stroke="#b5b5b5" stroke-width="1.800"/></svg><div class="sep" style="left:152px;top:666px;height:14px"></div>
<svg class="a" style="left:158px;top:665px" width="16" height="16" viewBox="0 0 16 16"><rect x="1.500" y="3.500" width="13" height="10" fill="#fdfdfd" stroke="#444" stroke-width="1"/></svg><svg class="a" style="left:178px;top:672px" width="5" height="3" viewBox="0 0 5 3"><path d="M0 0h5l-2.500 3z" fill="#000"/></svg>
<svg class="a" style="left:191px;top:665px" width="16" height="16" viewBox="0 0 16 16"><text x="8" y="14" font-size="17" font-weight="bold" text-anchor="middle" fill="#111" font-family="'Liberation Serif',serif">A</text></svg><svg class="a" style="left:212px;top:672px" width="5" height="3" viewBox="0 0 5 3"><path d="M0 0h5l-2.500 3z" fill="#000"/></svg>
<svg class="a" style="left:224px;top:665px" width="16" height="16" viewBox="0 0 16 16"><path d="M4.500 2.500l8 .5l-4 4.500l4 5.500h-9.500l.5-5z" fill="none" stroke="#c6c6c6" stroke-width="1.100"/><rect x="3" y="1" width="3" height="3" fill="#e6e6e6" stroke="#bdbdbd"/><rect x="11" y="1.500" width="3" height="3" fill="#e6e6e6" stroke="#bdbdbd"/><rect x="7" y="6" width="3" height="3" fill="#e6e6e6" stroke="#bdbdbd"/><rect x="11" y="11.500" width="3" height="3" fill="#e6e6e6" stroke="#bdbdbd"/><rect x="1.500" y="11.500" width="3" height="3" fill="#e6e6e6" stroke="#bdbdbd"/><rect x="2" y="6" width="3" height="3" fill="#e6e6e6" stroke="#bdbdbd"/></svg><div class="sep" style="left:246px;top:666px;height:14px"></div>
<div class="a" style="left:249px;top:662px;width:170px;height:21px;box-sizing:border-box;border:1px solid #dfe6f0;border-radius:2px;background:#fff"></div>
<svg class="a" style="left:253px;top:665px" width="13" height="15" viewBox="0 0 13 15"><path d="M.5 .5h8l4 3.500v10.500h-12z" fill="#cfe0fb" stroke="#4c78c8" stroke-width="1"/><path d="M8.500 .5v3.500h4" fill="#eef4ff" stroke="#4c78c8" stroke-width=".8"/><text x="5.800" y="12" font-size="13" font-style="italic" font-weight="bold" text-anchor="middle" fill="#14501a" font-family="'Liberation Serif',serif">O</text></svg>
<div class="t" style="left:271px;top:665.8px;font-size:12px;line-height:14px;transform:scaleX(0.7912);transform-origin:0 0;">Arial</div><svg class="a" style="left:408px;top:672px" width="7" height="4" viewBox="0 0 7 4"><path d="M0 0h7l-3.500 4z" fill="#000"/></svg>
<div class="a" style="left:420px;top:662px;width:45px;height:21px;box-sizing:border-box;border:1px solid #dfe6f0;border-radius:2px;background:#fff"></div>
<div class="t" style="left:423px;top:665.8px;font-size:12px;line-height:14px;transform:scaleX(0.8234);transform-origin:0 0;">10</div><svg class="a" style="left:454px;top:672px" width="7" height="4" viewBox="0 0 7 4"><path d="M0 0h7l-3.500 4z" fill="#000"/></svg>
<div class="t" style="left:472px;top:665px;width:11px;text-align:center;font-family:'Liberation Serif',serif;font-weight:bold;font-size:14px;line-height:16px">B</div>
<div class="t" style="left:494px;top:665px;width:11px;text-align:center;font-family:'Liberation Serif',serif;font-weight:bold;font-style:italic;font-size:14px;line-height:16px">I</div>
<div class="t" style="left:516px;top:665px;width:11px;text-align:center;font-family:'Liberation Serif',serif;font-weight:bold;font-size:14px;line-height:16px;text-decoration:underline">U</div>
<div class="sep" style="left:534px;top:666px;height:14px"></div>
<div class="t" style="left:543px;top:661px;width:15px;text-align:center;font-family:'Liberation Serif',serif;font-weight:bold;font-size:15px;line-height:16px">A</div><div class="a" style="left:541px;top:677px;width:18px;height:3px;background:#000"></div>
<svg class="a" style="left:566px;top:672px" width="5" height="3" viewBox="0 0 5 3"><path d="M0 0h5l-2.500 3z" fill="#000"/></svg>
<svg class="a" style="left:580px;top:664px" width="18" height="17" viewBox="0 0 18 17"><rect x="0" y="13" width="18" height="3" fill="#fdfcc0"/><path d="M3 6l5-4l5 5l-5 4z" fill="#e8e8e8" stroke="#555" stroke-width="1"/><path d="M5 4c0-3 3-3 3.500 0" fill="none" stroke="#555" stroke-width="1"/><path d="M13 7c2 1 2 3 1.500 5c-1-1.500-2-3-1.500-5z" fill="#caa040"/></svg>
<svg class="a" style="left:604px;top:672px" width="5" height="3" viewBox="0 0 5 3"><path d="M0 0h5l-2.500 3z" fill="#000"/></svg>
<svg class="a" style="left:617px;top:664px" width="18" height="17" viewBox="0 0 18 17"><rect x="0" y="13" width="18" height="3" fill="#000"/><path d="M2 11h4" stroke="#333" stroke-width="1"/><path d="M6 11l5.500-6.500l3 2.500l-5.500 5z" fill="#fff" stroke="#333" stroke-width="1"/><path d="M12 4l2-2.500l2.500 2l-2 2.500z" fill="#888" stroke="#333" stroke-width=".8"/></svg>
<svg class="a" style="left:642px;top:672px" width="5" height="3" viewBox="0 0 5 3"><path d="M0 0h5l-2.500 3z" fill="#000"/></svg>
<div class="a" style="left:655px;top:677px;width:18px;height:3px;background:#4cf018"></div><div class="a" style="left:662px;top:668px;width:4px;height:4px;border-radius:2px;background:#10107a"></div>
<svg class="a" style="left:680px;top:672px" width="5" height="3" viewBox="0 0 5 3"><path d="M0 0h5l-2.500 3z" fill="#000"/></svg>
<div class="a" style="left:8px;top:686px;width:1117px;height:20px;background:#f1f1f1"></div>
<div class="t" style="left:853.5px;top:689.8px;font-size:12px;line-height:14px;letter-spacing:-0.400px;">-43140,077&nbsp; 263047,683 Meter</div><div class="a" style="left:849px;top:688px;width:257px;height:17px;box-sizing:border-box;border:1px dashed #fafafa"></div><div class="a" style="left:8px;top:688px;width:838px;height:17px;box-sizing:border-box;border:1px dashed #fbfbfb;border-left:none"></div>
<svg class="a" style="left:1114px;top:696px" width="9" height="9" viewBox="0 0 9 9"><path d="M6 0h2v2h-2zM6 3h2v2h-2zM6 6h2v2h-2zM3 3h2v2h-2zM3 6h2v2h-2zM0 6h2v2h-2z" fill="#fff"/><path d="M6 0h1.300v1.300h-1.300zM6 3h1.300v1.300h-1.300zM6 6h1.300v1.300h-1.300zM3 3h1.300v1.300h-1.300zM3 6h1.300v1.300h-1.300zM0 6h1.300v1.300h-1.300z" fill="#a8a8a8"/></svg>
<!--/BOTTOM-->
</div>
</body>
</html>
